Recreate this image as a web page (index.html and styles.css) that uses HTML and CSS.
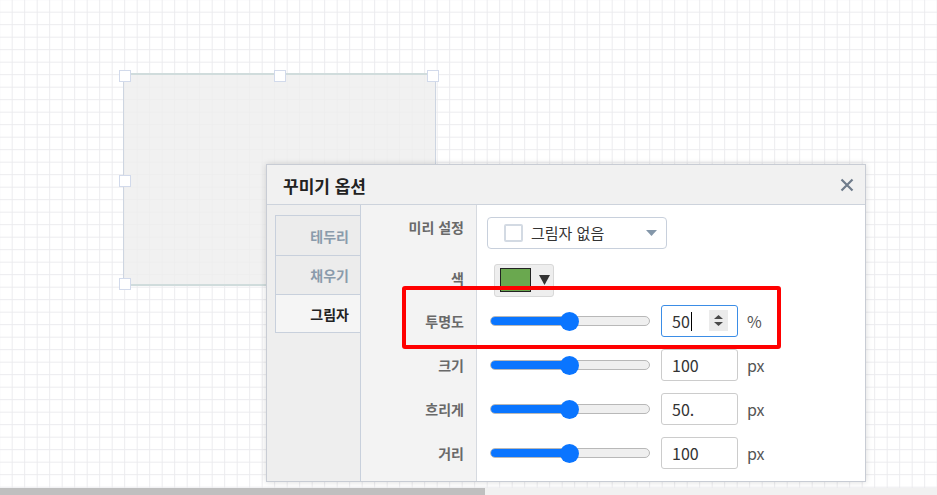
FILE: index.html
```html
<!DOCTYPE html>
<html lang="ko">
<head>
<meta charset="utf-8">
<title>꾸미기 옵션</title>
<link rel="stylesheet" href="styles.css">
</head>
<body>
<div class="canvas">
  <div class="shape"></div>
  <span class="handle h-tl"></span>
  <span class="handle h-tm"></span>
  <span class="handle h-tr"></span>
  <span class="handle h-ml"></span>
  <span class="handle h-bl"></span>

  <div class="dialog">
    <div class="dlg-head">
      <span class="dlg-title">꾸미기 옵션</span>
      <svg class="close" width="14" height="14" viewBox="0 0 14 14"><path d="M1.5 1.5 L12.5 12.5 M12.5 1.5 L1.5 12.5" stroke="#6f7c8b" stroke-width="2.2" stroke-linecap="butt" fill="none"/></svg>
    </div>
    <div class="dlg-body">
      <div class="tabs">
        <div class="tab">테두리</div>
        <div class="tab">채우기</div>
        <div class="tab active">그림자</div>
      </div>
      <div class="form">
        <div class="lbl top">미리 설정</div>
        <div class="ctl top">
          <div class="select">
            <span class="chk"></span>
            <span class="sel-text">그림자 없음</span>
            <svg class="caret" width="11" height="6" viewBox="0 0 11 6"><path d="M0 0 H11 L5.5 6 Z" fill="#8497aa"/></svg>
          </div>
        </div>

        <div class="lbl">색</div>
        <div class="ctl">
          <div class="colorbtn">
            <span class="swatch"></span>
            <svg width="11" height="10" viewBox="0 0 11 10"><path d="M0 0 H11 L5.5 10 Z" fill="#333"/></svg>
          </div>
        </div>

        <div class="lbl">투명도</div>
        <div class="ctl">
          <div class="slider"><div class="track"><div class="fill" style="width:50%"></div></div><span class="thumb" style="left:50%"></span></div>
          <div class="num focus"><span class="val">50</span><span class="cursor"></span>
            <span class="spin"><svg width="9" height="11" viewBox="0 0 9 11"><path d="M0 4 L4.5 0 L9 4 Z M0 7 L9 7 L4.5 11 Z" fill="#4a4a4a"/></svg></span>
          </div>
          <span class="unit">%</span>
        </div>

        <div class="lbl">크기</div>
        <div class="ctl">
          <div class="slider"><div class="track"><div class="fill" style="width:50%"></div></div><span class="thumb" style="left:50%"></span></div>
          <div class="num"><span class="val">100</span></div>
          <span class="unit">px</span>
        </div>

        <div class="lbl">흐리게</div>
        <div class="ctl">
          <div class="slider"><div class="track"><div class="fill" style="width:50%"></div></div><span class="thumb" style="left:50%"></span></div>
          <div class="num"><span class="val">50.</span></div>
          <span class="unit">px</span>
        </div>

        <div class="lbl">거리</div>
        <div class="ctl">
          <div class="slider"><div class="track"><div class="fill" style="width:50%"></div></div><span class="thumb" style="left:50%"></span></div>
          <div class="num"><span class="val">100</span></div>
          <span class="unit">px</span>
        </div>

        <div class="lbl"></div>
        <div class="ctl"></div>
      </div>
    </div>
  </div>

  <div class="highlight"></div>
</div>
<div class="hscroll"><div class="hthumb"></div></div>
</body>
</html>
```

FILE: styles.css
```css
* { box-sizing: border-box; }

html, body {
  margin: 0;
  padding: 0;
  background: #fff;
  font-family: "Noto Sans CJK KR", "Noto Sans", sans-serif;
  overflow: hidden;
}

.canvas {
  position: relative;
  height: 488px;
  overflow: hidden;
  background-color: #fff;
  background-image:
    linear-gradient(to right, #ebebee 1px, transparent 1px),
    linear-gradient(to bottom, #ebebee 1px, transparent 1px);
  background-size: 12.5px 12.5px;
  background-position: 11.7px 11.7px;
}

.shape {
  position: absolute;
  left: 123px;
  top: 73px;
  width: 313px;
  height: 213px;
  background: rgba(238, 238, 238, 0.8);
  border-top: 2px solid #d0dcdc;
  border-bottom: 2px solid #d0dcdc;
  border-left: 1px solid #cdd5e1;
  border-right: 1px solid #cdd5e1;
}

.handle {
  position: absolute;
  width: 12px;
  height: 12px;
  background: #fff;
  border: 1px solid #d2daeb;
}
.h-tl { left: 119px; top: 70px; }
.h-tm { left: 274px; top: 70px; }
.h-tr { left: 427px; top: 70px; }
.h-ml { left: 119px; top: 175px; }
.h-bl { left: 119px; top: 278px; }

.dialog {
  position: absolute;
  left: 266px;
  top: 164px;
  width: 600px;
  height: 318px;
  background: #fff;
  border: 1px solid #c8ccd4;
  box-shadow: 0 0 6px rgba(0, 0, 0, 0.15);
  display: flex;
  flex-direction: column;
}

.dlg-head {
  height: 40px;
  flex: none;
  display: flex;
  align-items: center;
  justify-content: space-between;
  padding: 0 11px 0 16px;
  background: #f1f1f1;
  border-bottom: 1px solid #cdd3dc;
}

.dlg-title {
  font-size: 17px;
  font-weight: 700;
  color: #222;
  line-height: 20px;
  margin-top: 2px;
}

.close { display: block; margin-top: 1px; }

.dlg-body {
  flex: 1;
  display: flex;
  min-height: 0;
}

.tabs {
  width: 94px;
  flex: none;
  background: #eeeeee;
  border-right: 1px solid #c8d0dc;
  padding: 10px 0 0 8px;
  display: flex;
  flex-direction: column;
}

.tab {
  height: 39px;
  display: flex;
  align-items: center;
  justify-content: flex-end;
  padding-right: 11px;
  border-left: 1px solid #c8d0dc;
  border-bottom: 1px solid #c8d0dc;
  font-size: 14px;
  font-weight: 700;
  color: #8a9bab;
  background: #ececec;
}
.tab:first-child { border-top: 1px solid #c8d0dc; height: 41px; }
.tab.active { background: #f5f5f5; color: #222; height: 38px; }

.form {
  flex: 1;
  display: grid;
  grid-template-columns: 116px 1fr;
  grid-template-rows: 52px 42px 44px 44px 44px 44px 1fr;
}

.lbl {
  background: #f3f3f3;
  border-right: 1px solid #d6dae0;
  display: flex;
  align-items: center;
  justify-content: flex-end;
  padding-right: 12px;
  font-size: 14px;
  font-weight: 700;
  color: #696969;
  line-height: 20px;
}

.ctl {
  display: flex;
  align-items: center;
  padding-left: 13px;
}

.lbl.top { align-items: flex-start; padding-top: 12px; }
.ctl.top { align-items: flex-start; padding-top: 12px; padding-left: 10px; }

.select {
  width: 180px;
  height: 32px;
  border: 1px solid #c8d0dc;
  border-radius: 4px;
  background: #fff;
  display: flex;
  align-items: center;
  padding: 0 9px 0 16px;
}
.chk {
  width: 19px;
  height: 18px;
  border: 2px solid #d3dae3;
  border-radius: 2px;
  flex: none;
}
.sel-text {
  margin-left: 8px;
  font-size: 15px;
  color: #333;
  flex: 1;
  line-height: 20px;
}
.caret { display: block; flex: none; }

.colorbtn {
  margin-left: 4px;
  width: 60px;
  height: 33px;
  background: #eeeeee;
  border: 1px solid #d8d8d8;
  border-radius: 3px;
  display: flex;
  align-items: center;
  padding-left: 5px;
  gap: 8px;
  margin-top: 4px;
}
.swatch {
  width: 31px;
  height: 24px;
  background: #6aa84f;
  border: 1px solid #222;
}

.slider {
  position: relative;
  width: 160px;
  height: 19px;
  display: flex;
  align-items: center;
  flex: none;
}
.track {
  width: 100%;
  height: 10px;
  border: 1px solid #b8b8b8;
  border-radius: 5px;
  background: #efefef;
  overflow: hidden;
}
.fill {
  height: 100%;
  background: #0a75ff;
}
.thumb {
  position: absolute;
  top: 0;
  width: 19px;
  height: 19px;
  margin-left: -10px;
  border-radius: 50%;
  background: #0a75ff;
}

.num {
  position: relative;
  margin-left: 11px;
  width: 77px;
  height: 32px;
  border: 1px solid #cccccc;
  border-radius: 3px;
  display: flex;
  align-items: center;
  padding-left: 10px;
  font-size: 16px;
  color: #333;
  line-height: 20px;
  flex: none;
}
.num.focus { border-color: #3b8de6; }
.cursor {
  width: 1px;
  height: 19px;
  background: #000;
  margin-left: 1px;
}
.spin {
  position: absolute;
  right: 9px;
  top: 4px;
  width: 19px;
  height: 21px;
  background: #ebebeb;
  display: flex;
  align-items: center;
  justify-content: center;
}
.spin svg { display: block; }

.unit {
  margin-left: 9px;
  font-size: 16px;
  color: #555;
  line-height: 20px;
}

.highlight {
  position: absolute;
  left: 402px;
  top: 286px;
  width: 379px;
  height: 63px;
  border: 4px solid #ff0000;
  border-radius: 3px;
}

.hscroll {
  height: 7px;
  background: #f1f1f1;
}
.hthumb {
  width: 485px;
  height: 100%;
  background: #bfbfbf;
}
```
